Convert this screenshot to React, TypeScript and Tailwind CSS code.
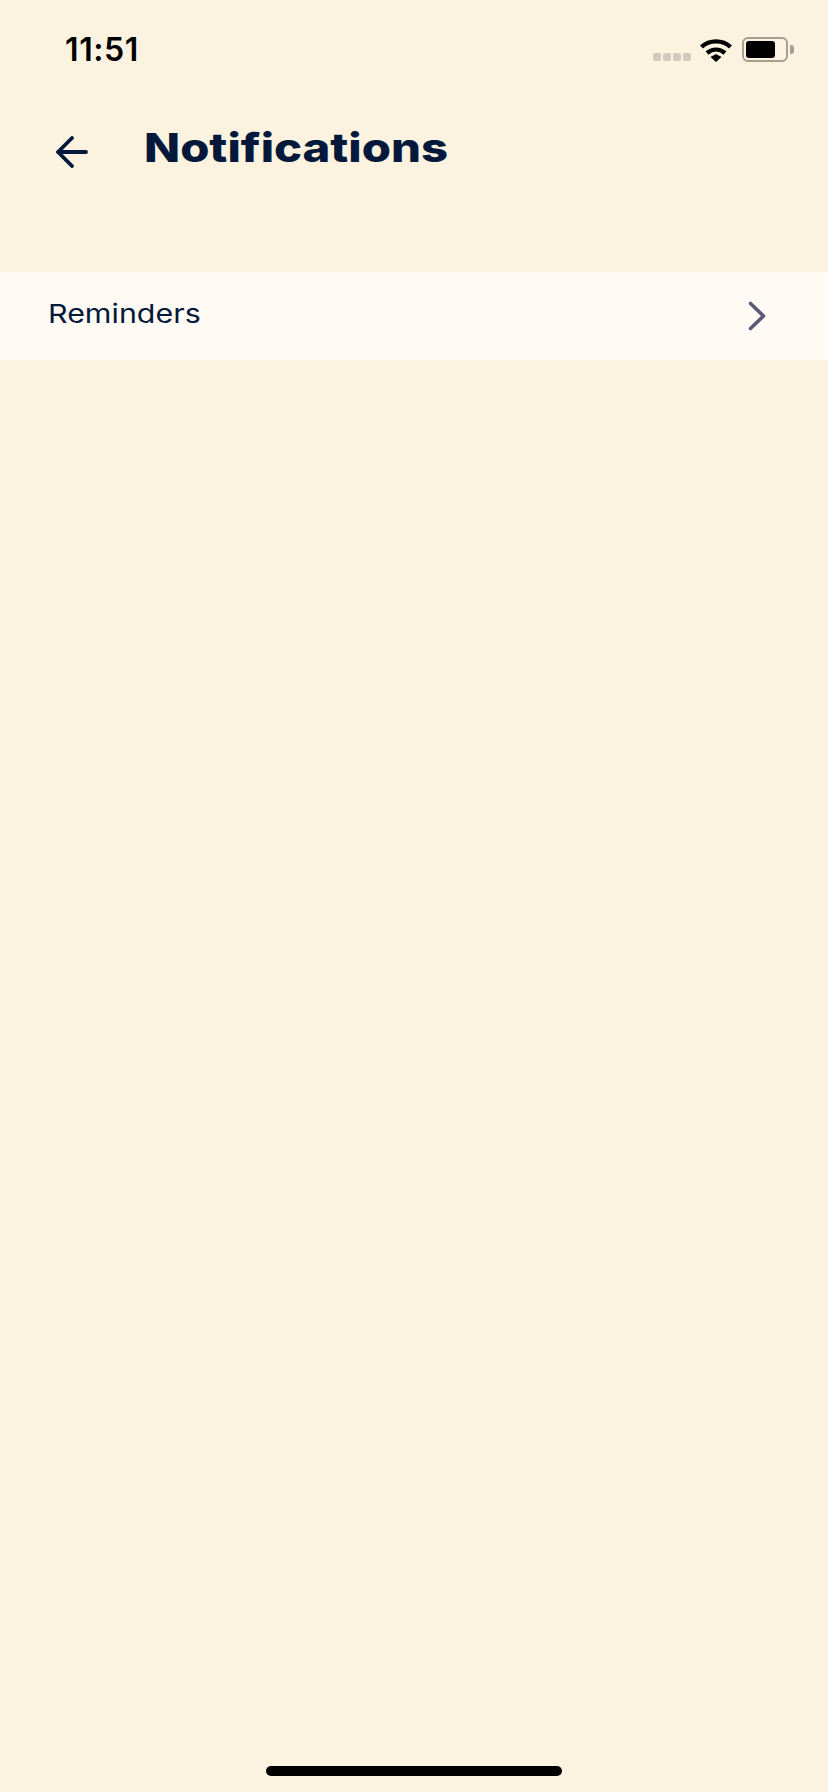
export default function App() {
  return (
    <div className="flex h-[1792px] w-[828px] flex-col overflow-hidden bg-[#FBF3E0] font-['Inter',sans-serif]">
      {/* status bar */}
      <div className="flex h-[100px] items-start justify-between pl-[65px] pr-[34px] pt-[30px]">
        <span className="text-[32px] font-semibold leading-[40px] tracking-[0.6px] text-black">11:51</span>
        <div className="flex items-center pt-[7px]">
          <div className="mt-[15px] flex gap-[2px]">
            <span className="h-[8px] w-[8px] rounded-[2px] bg-[#D2CBBB]" />
            <span className="h-[8px] w-[8px] rounded-[2px] bg-[#D2CBBB]" />
            <span className="h-[8px] w-[8px] rounded-[2px] bg-[#D2CBBB]" />
            <span className="h-[8px] w-[8px] rounded-[2px] bg-[#D2CBBB]" />
          </div>
          <svg className="ml-[9px]" width="32" height="24" viewBox="0 0 32 24" fill="none">
            <path d="M1.5 9C9.5 1.5 22.5 1.5 30.5 9" stroke="black" strokeWidth="4.4" />
            <path d="M7 15C12.5 10.5 19.5 10.5 25 15" stroke="black" strokeWidth="4.4" />
            <path d="M10.5 19L16 16L21.5 19L16 24Z" fill="black" />
          </svg>
          <div className="ml-[10px] flex items-center">
            <div className="flex h-[25px] w-[46px] items-center rounded-[6px] border-[2px] border-[#A79F8E] p-[2px]">
              <div className="h-full w-[29px] rounded-[3px] bg-black" />
            </div>
            <span className="ml-[2px] h-[9px] w-[4px] rounded-r-[3px] bg-[#A79F8E]" />
          </div>
        </div>
      </div>

      {/* header */}
      <div className="flex h-[172px] items-start pl-[56px]">
        <svg className="mt-[36px]" width="32" height="32" viewBox="0 0 32 32" fill="none">
          <path d="M30 16H2M16 2L2 16L16 30" stroke="#03183A" strokeWidth="3.8" strokeLinecap="round" strokeLinejoin="round" />
        </svg>
        <h1 className="ml-[56px] mt-[24px] origin-left scale-x-[1.18] text-[40px] font-extrabold leading-[48px] text-[#03183A]">
          Notifications
        </h1>
      </div>

      {/* rows */}
      <div className="flex h-[88px] items-center justify-between bg-[#FFFAF4] pl-[48px] pr-[62px]">
        <span className="-mt-[4px] origin-left scale-x-[1.17] text-[26px] font-normal leading-[30px] text-[#03183A]">Reminders</span>
        <svg width="18" height="30" viewBox="0 0 18 30" fill="none">
          <path d="M2.5 2.5L15.5 15L2.5 27.5" stroke="#5A5A78" strokeWidth="3.6" strokeLinecap="round" strokeLinejoin="round" />
        </svg>
      </div>

      {/* home indicator */}
      <div className="mt-auto flex justify-center pb-[16px]">
        <div className="h-[10px] w-[296px] rounded-full bg-black" />
      </div>
    </div>
  );
}
